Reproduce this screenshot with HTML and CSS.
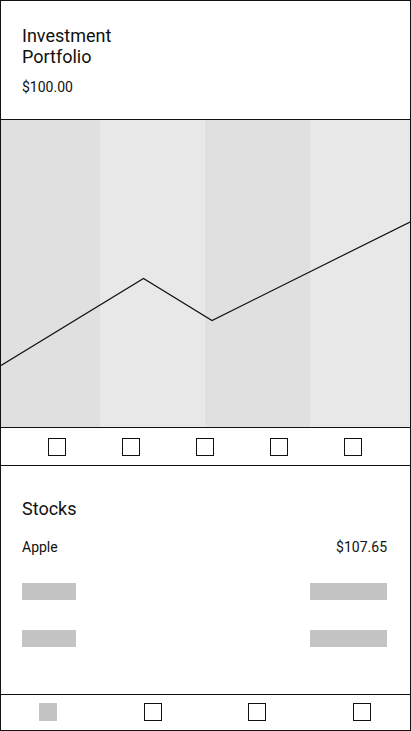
FILE: index.html
```html
<!DOCTYPE html>
<html>
<head>
<meta charset="utf-8">
<link rel="stylesheet" href="styles.css">
</head>
<body>
<div class="page">
  <header class="header">
    <div class="title">Investment<br>Portfolio</div>
    <div class="price">$100.00</div>
  </header>
  <section class="chart">
    <svg class="chart-svg" width="409" height="307" viewBox="0 0 409 307">
      <rect x="0" y="0" width="99" height="307" fill="#e0e0e0"/>
      <rect x="99" y="0" width="105" height="307" fill="#e8e8e8"/>
      <rect x="204" y="0" width="105" height="307" fill="#e0e0e0"/>
      <rect x="309" y="0" width="100" height="307" fill="#e8e8e8"/>
      <polyline points="0,245.5 142.5,158.5 211,200.5 409,102" fill="none" stroke="#111" stroke-width="1.2"/>
    </svg>
  </section>
  <div class="tabs">
    <span class="box"></span>
    <span class="box"></span>
    <span class="box"></span>
    <span class="box"></span>
    <span class="box"></span>
  </div>
  <section class="stocks">
    <div class="stocks-title">Stocks</div>
    <div class="row row-text">
      <span>Apple</span>
      <span>$107.65</span>
    </div>
    <div class="row row-ph">
      <span class="ph ph-left"></span>
      <span class="ph ph-right"></span>
    </div>
    <div class="row row-ph2">
      <span class="ph ph-left"></span>
      <span class="ph ph-right"></span>
    </div>
  </section>
  <nav class="nav">
    <span class="box box-filled"></span>
    <span class="box"></span>
    <span class="box"></span>
    <span class="box"></span>
  </nav>
</div>
</body>
</html>
```

FILE: styles.css
```css
* {
  box-sizing: border-box;
}
html, body {
  margin: 0;
  padding: 0;
  background: #fff;
}
body {
  font-family: Roboto, "Liberation Sans", sans-serif;
  color: #111;
}
.page {
  width: 411px;
  height: 731px;
  border: 1px solid #111;
  display: flex;
  flex-direction: column;
  overflow: hidden;
}
.header {
  height: 119px;
  flex: none;
  border-bottom: 1px solid #111;
  padding: 24px 23px 0 21px;
}
.title {
  font-size: 18px;
  line-height: 21px;
}
.price {
  margin-top: 12px;
  font-size: 14px;
  line-height: 16px;
}
.chart {
  height: 308px;
  flex: none;
  border-bottom: 1px solid #111;
}
.chart-svg {
  display: block;
}
.tabs {
  height: 38px;
  flex: none;
  border-bottom: 1px solid #111;
  display: flex;
  align-items: flex-start;
  padding: 10px 0 0 47px;
  gap: 56px;
}
.box {
  display: block;
  width: 18px;
  height: 18px;
  border: 1px solid #111;
  flex: none;
}
.box-filled {
  background: #c4c4c4;
  border-color: #c4c4c4;
}
.stocks {
  height: 229px;
  flex: none;
  border-bottom: 1px solid #111;
  padding: 32px 23px 0 21px;
}
.stocks-title {
  font-size: 18px;
  line-height: 21px;
}
.row {
  display: flex;
  justify-content: space-between;
  align-items: center;
}
.row-text {
  margin-top: 20px;
  font-size: 14px;
  line-height: 16px;
}
.row-ph {
  margin-top: 28px;
}
.row-ph2 {
  margin-top: 30px;
}
.ph {
  display: block;
  height: 17px;
  background: #c4c4c4;
}
.ph-left {
  width: 54px;
}
.ph-right {
  width: 77px;
}
.nav {
  flex: 1;
  display: flex;
  align-items: flex-start;
  padding: 8px 0 0 38px;
  gap: 86.7px;
}
```
